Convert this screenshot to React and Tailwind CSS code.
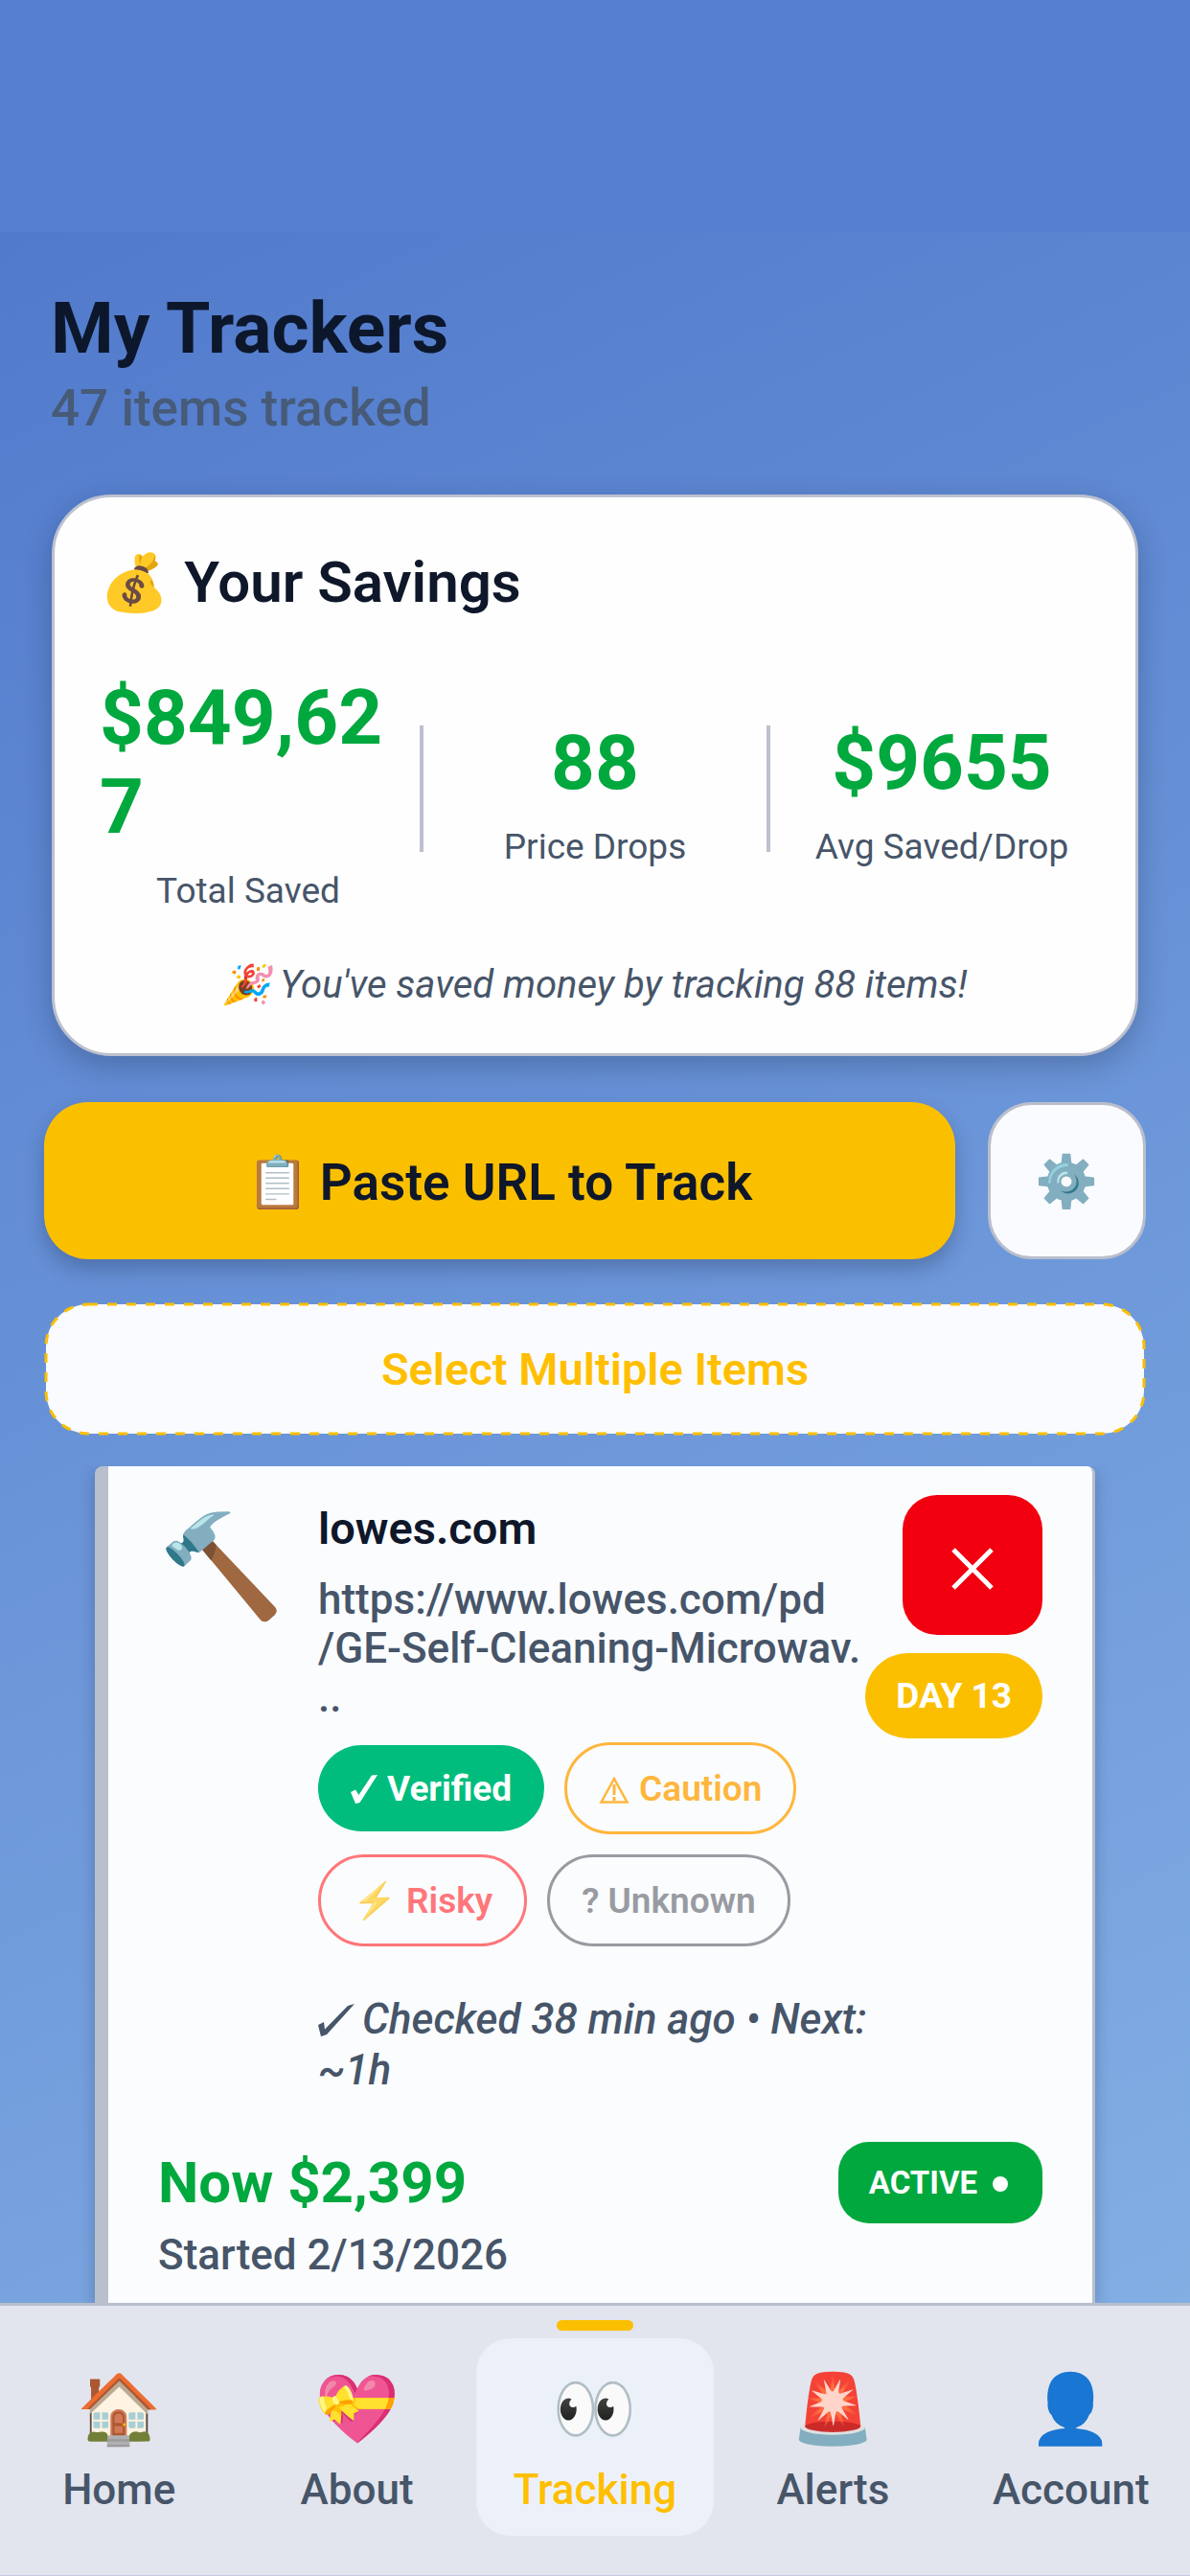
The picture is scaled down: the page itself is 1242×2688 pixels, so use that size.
import React from "react";

const stats = [
  { value: "$849,627", label: "Total Saved" },
  { value: "88", label: "Price Drops" },
  { value: "$9655", label: "Avg Saved/Drop" },
];

const tabs = [
  { icon: "🏠", label: "Home" },
  { icon: "💝", label: "About" },
  { icon: "👀", label: "Tracking", active: true },
  { icon: "🚨", label: "Alerts" },
  { icon: "👤", label: "Account" },
];

function SavingsCard() {
  return (
    <section className="mx-[54px] mt-[59px] rounded-[62px] border-[3px] border-[#bcc1cf] bg-[#fefefe] px-[47px] pt-[54px] pb-12 shadow-[0_10px_30px_rgba(15,23,42,0.25)]">
      <h2 className="flex items-center gap-4 text-[60px] leading-[70px] font-semibold text-[#0f172a]">
        <span className="text-[58px]">💰</span>
        Your Savings
      </h2>
      <div className="mt-[60px] flex items-center">
        {stats.map((s, i) => (
          <React.Fragment key={s.label}>
            {i > 0 && <div className="mx-6 mb-2 h-[132px] w-1 shrink-0 bg-[#bcc1cf]" />}
            <div className="flex min-w-0 flex-1 flex-col items-center">
              <div className="text-[80px] leading-[93px] font-bold break-all text-[#00a83e]">{s.value}</div>
              <div className="mt-5 text-[37px] leading-[42px] whitespace-nowrap text-[#475569]">{s.label}</div>
            </div>
          </React.Fragment>
        ))}
      </div>
      <p className="mt-[54px] text-center text-[40px] leading-[46px] text-[#475569] italic">
        🎉 You've saved money by tracking 88 items!
      </p>
    </section>
  );
}

function WarningIcon() {
  return (
    <svg viewBox="0 0 32 29" className="h-[29px] w-8" fill="none" stroke="currentColor">
      <path d="M16 3L29.500 27.500H2.500Z" strokeWidth="2.500" />
      <path d="M16 9V20M16 22V26" strokeWidth="3" />
    </svg>
  );
}

function TrackerCard() {
  const pill =
    "flex h-24 items-center gap-[10px] rounded-full border-[3px] px-[33px] pt-[2px] text-[37px] leading-[44px] font-semibold";
  return (
    <article className="mx-[99px] flex-1 rounded-t-[8px] border-r-[3px] border-l-[14px] border-[#b8bfcd] bg-[#fafcfe] px-[52px] pt-[30px] shadow-[0_6px_16px_rgba(15,23,42,0.25)]">
      <div className="flex items-start">
        <div className="w-[167px] shrink-0 text-[106px] leading-[150px]">🔨</div>
        <div className="min-w-0 flex-1 pt-[7px]">
          <h3 className="text-[47px] leading-[55px] font-semibold text-[#0f172a]">lowes.com</h3>
          <p className="mt-[22px] text-[44px] leading-[51px] font-medium whitespace-nowrap text-[#475569]">
            https://www.lowes.com/pd
            <br />
            /GE-Self-Cleaning-Microwav.
            <br />
            ..
          </p>
          <div className="mt-[21px] flex flex-wrap items-center gap-[21px]">
            <button className="flex h-[90px] items-center gap-[10px] rounded-full bg-[#00bd7e] px-[34px] pt-[2px] text-[37px] leading-[44px] font-bold text-white">
              <svg viewBox="0 0 28 30" className="h-[30px] w-7" fill="currentColor">
                <path d="M0 18L5 15.500L8.500 21L22 0.500L28 0L9.500 29L5 30Z" />
              </svg>
              Verified
            </button>
            <button className={`${pill} border-[#ffb63c] text-[#ffb63c]`}>
              <WarningIcon />
              Caution
            </button>
            <button className={`${pill} border-[#ff767a] text-[#ff767a]`}>
              <span className="opacity-70">⚡</span>
              Risky
            </button>
            <button className={`${pill} border-[#989ba1] text-[#989ba1]`}>? Unknown</button>
          </div>
          <p className="mt-[50px] text-[44px] leading-[53px] font-medium whitespace-nowrap text-[#475569] italic">
            <svg viewBox="0 0 38 34" className="mr-2 inline h-[34px] w-[38px] align-[-3px]" fill="currentColor">
              <path d="M0 22L6 19L7 26.500L31 2L38 0L9 32L3 34Z" />
            </svg>
            Checked 38 min ago • Next:
            <br />
            ~1h
          </p>
        </div>
        <div className="flex shrink-0 flex-col items-end gap-[19px]">
          <button aria-label="Remove tracker" className="flex size-[146px] items-center justify-center rounded-[36px] bg-[#f2000f] text-white">
            <svg viewBox="0 0 44 44" className="mt-2 size-11" fill="none" stroke="currentColor" strokeWidth="5">
              <path d="M2 2L42 42M42 2L2 42" />
            </svg>
          </button>
          <span className="flex h-[89px] items-center rounded-full bg-[#fbbf00] px-8 text-[37px] leading-[44px] font-bold text-white">
            DAY 13
          </span>
        </div>
      </div>
      <div className="mt-12 flex items-start justify-between">
        <div className="pt-2">
          <p className="text-[60px] leading-[69px] font-bold text-[#00a83e]">Now $2,399</p>
          <p className="mt-4 text-[44px] leading-[51px] font-medium text-[#475569]">Started 2/13/2026</p>
        </div>
        <span className="flex h-[85px] items-center gap-4 rounded-[32px] bg-[#00a83e] pr-9 pl-8 text-[33px] leading-[40px] font-bold text-white">
          ACTIVE
          <span className="mt-[3px] size-4 rounded-full bg-white" />
        </span>
      </div>
    </article>
  );
}

function TabBar() {
  return (
    <nav className="relative z-10 grid shrink-0 grid-cols-5 border-t-[3px] border-b border-t-[#b8bfcd] border-b-[#c6cae0] bg-[#e2e5ee] pt-[34px] pb-[41px]">
      {tabs.map((t) => (
        <a
          key={t.label}
          href="#"
          className={
            t.active
              ? "relative flex h-[206px] flex-col items-center rounded-[36px] bg-[#ecf1f9] text-[#ffbf00]"
              : "relative flex h-[206px] flex-col items-center text-[#475569]"
          }
        >
          {t.active && <span className="absolute -top-[19px] h-[11px] w-20 rounded-full bg-[#fbbf00]" />}
          <span className="mt-[29px] text-[71px] leading-[90px]">{t.icon}</span>
          <span className="mt-[14px] text-[44px] leading-[51px] font-medium">{t.label}</span>
        </a>
      ))}
    </nav>
  );
}

export default function App() {
  return (
    <div className="flex h-screen flex-col overflow-hidden bg-[#557fcf] font-['Roboto','Noto_Color_Emoji',sans-serif]">
      <div className="h-[242px] shrink-0" />
      <main className="flex min-h-0 flex-1 flex-col bg-linear-[155deg] from-[#517acc] to-[#82aee4]">
        <header className="px-[53px] pt-14">
          <h1 className="text-[75px] leading-[88px] font-bold text-[#0d172b]">My Trackers</h1>
          <p className="mt-[10px] text-[53px] leading-[61px] font-medium text-[#475b78]">47 items tracked</p>
        </header>
        <SavingsCard />
        <div className="mx-[46px] mt-12 flex h-[164px] shrink-0 gap-[34px]">
          <button className="flex flex-1 items-center justify-center gap-[10px] rounded-[46px] bg-[#fac000] pt-1 text-[53px] leading-[61px] font-semibold text-[#0f172a] shadow-[0_10px_20px_rgba(15,23,42,0.25)]">
            <span>📋</span>
            Paste URL to Track
          </button>
          <button aria-label="Settings" className="w-[165px] rounded-[46px] border-[3px] border-[#b9becb] bg-[#fafbfe] pt-1 text-[53px]">
            ⚙️
          </button>
        </div>
        <button className="relative mx-[46px] mt-[45px] h-[139px] shrink-0 rounded-[46px] border-2 border-transparent bg-[#fafbfe] bg-clip-padding text-[47px] leading-[54px] font-semibold text-[#ffbf00]">
          <svg className="absolute inset-0 size-full overflow-visible" fill="none" aria-hidden="true">
            <rect width="100%" height="100%" rx="44" stroke="#fbbf00" strokeWidth="3" strokeDasharray="10 10" />
          </svg>
          Select Multiple Items
        </button>
        <div className="mt-8 flex min-h-0 flex-1 flex-col overflow-hidden">
          <TrackerCard />
        </div>
      </main>
      <TabBar />
    </div>
  );
}
